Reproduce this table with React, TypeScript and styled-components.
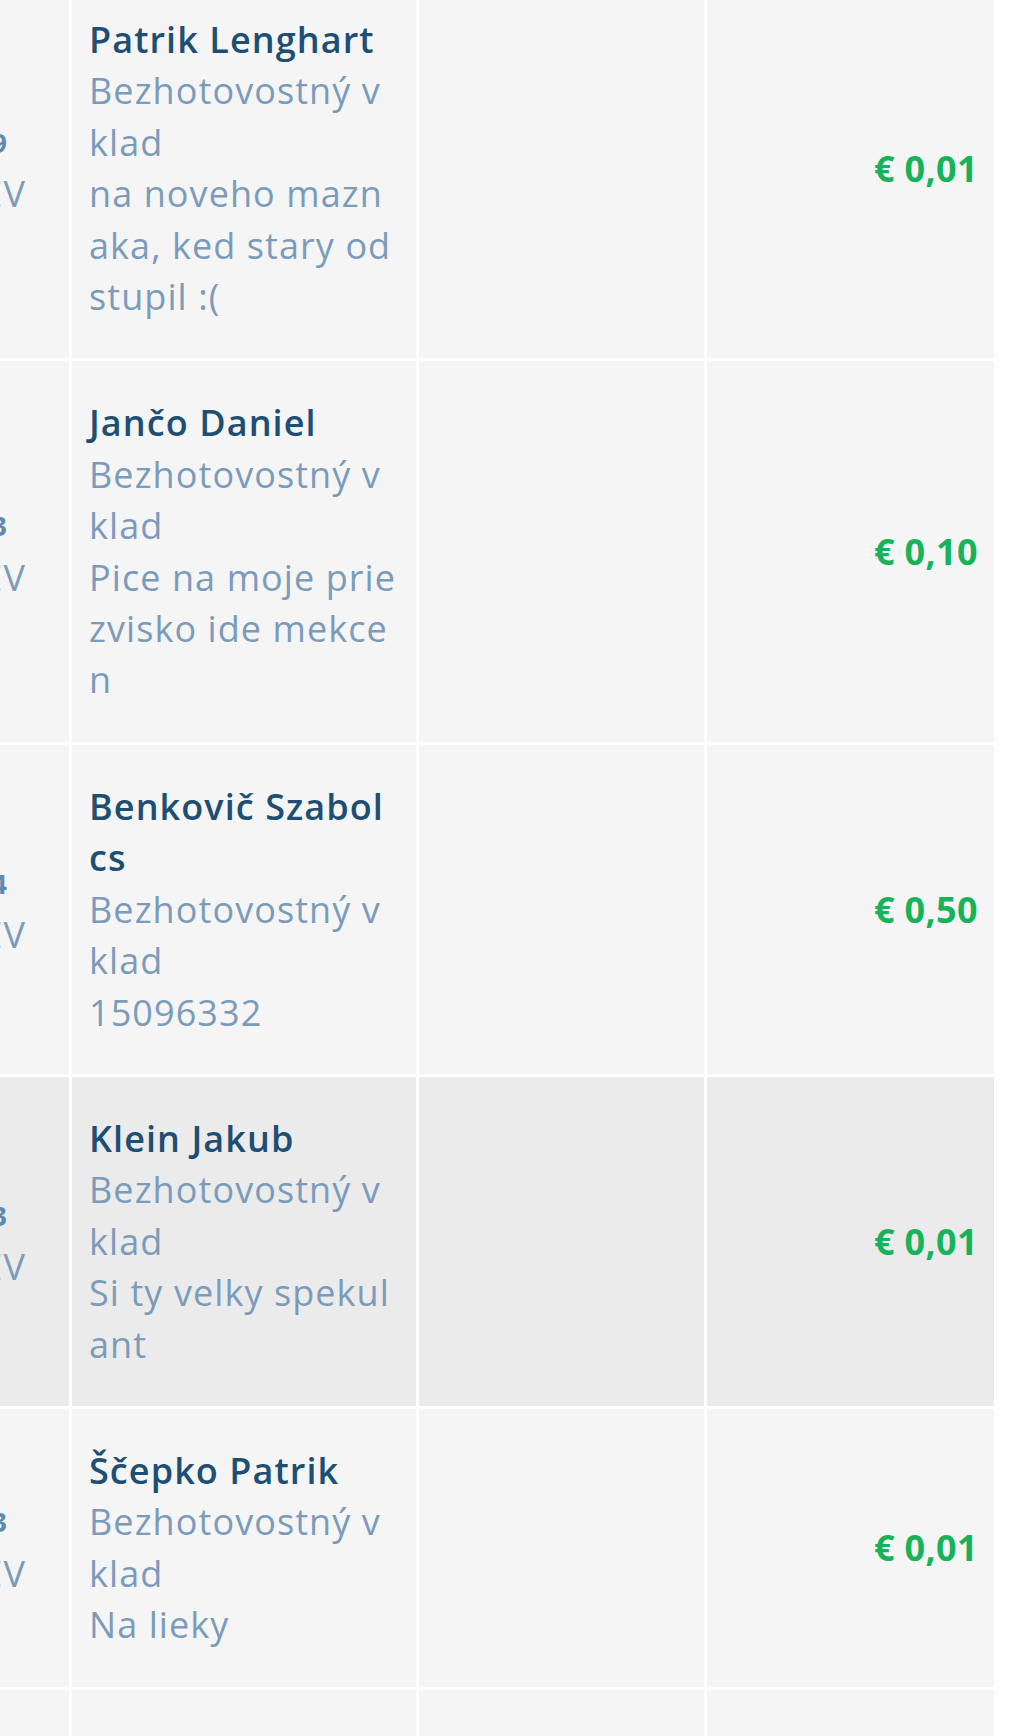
import styled, { createGlobalStyle } from "styled-components";

type Payment = {
  day: string;
  label: string;
  name: string;
  kind: string;
  note: string;
  amount: string;
  active?: boolean;
};

const payments: Payment[] = [
  {
    day: "29.09",
    label: "PREV",
    name: "Patrik Lenghart",
    kind: "Bezhotovostný vklad",
    note: "na noveho maznaka, ked stary odstupil :(",
    amount: "€ 0,01",
  },
  {
    day: "28.03",
    label: "PREV",
    name: "Jančo Daniel",
    kind: "Bezhotovostný vklad",
    note: "Pice na moje priezvisko ide mekcen",
    amount: "€ 0,10",
  },
  {
    day: "27.04",
    label: "PREV",
    name: "Benkovič Szabolcs",
    kind: "Bezhotovostný vklad",
    note: "15096332",
    amount: "€ 0,50",
  },
  {
    day: "27.03",
    label: "PREV",
    name: "Klein Jakub",
    kind: "Bezhotovostný vklad",
    note: "Si ty velky spekulant",
    amount: "€ 0,01",
    active: true,
  },
  {
    day: "26.03",
    label: "PREV",
    name: "Ščepko Patrik",
    kind: "Bezhotovostný vklad",
    note: "Na lieky",
    amount: "€ 0,01",
  },
  {
    day: "26.03",
    label: "PREV",
    name: "Horváth Martin",
    kind: "Bezhotovostný vklad",
    note: "Dik",
    amount: "€ 0,05",
  },
];

const App: React.FC = () => {
  return (
    <>
      <GlobalStyle />
      <ScrollArea>
        <PaymentsTable>
          <colgroup>
            <col style={{ width: 69 }} />
            <col style={{ width: 344 }} />
            <col style={{ width: 285 }} />
            <col style={{ width: 287 }} />
          </colgroup>
          <tbody>
            {payments.map((p, i) => (
              <Row key={i} $active={p.active}>
                <DateCell>
                  <DateClip>
                    <DateDay>{p.day}</DateDay>
                    <DateLabel>{p.label}</DateLabel>
                  </DateClip>
                </DateCell>
                <InfoCell>
                  <PayerName>{p.name}</PayerName>
                  <PayerText>{p.kind}</PayerText>
                  <PayerText>{p.note}</PayerText>
                </InfoCell>
                <SymbolCell />
                <AmountCell>{p.amount}</AmountCell>
              </Row>
            ))}
          </tbody>
        </PaymentsTable>
      </ScrollArea>
    </>
  );
};

export default App;

const GlobalStyle = createGlobalStyle`
  html, body {
    margin: 0;
    padding: 0;
    background: #fff;
  }
  body {
    font-family: "Open Sans", "Noto Sans", sans-serif;
    overflow: hidden;
  }
`;

const ScrollArea = styled.div`
  width: 1024px;
  overflow: hidden;
  margin-top: -25px;
`;

const PaymentsTable = styled.table`
  border-collapse: separate;
  border-spacing: 3px;
  table-layout: fixed;
  width: 1000px;
  margin-left: -3px;
  font-size: 36px;
  line-height: 51.4px;
  letter-spacing: 0.03em;
`;

const Row = styled.tr<{ $active?: boolean }>`
  td {
    background: ${(p) => (p.$active ? "#ebebeb" : "#f5f5f5")};
    vertical-align: middle;
  }
`;

const DateCell = styled.td`
  padding: 0;
`;

const DateClip = styled.div`
  display: flex;
  flex-direction: column;
  align-items: flex-end;
  overflow: hidden;
  white-space: nowrap;
`;

const DateDay = styled.span`
  font-size: 27px;
  font-weight: 700;
  color: #5f8ab3;
  margin-right: 61px;
`;

const DateLabel = styled.span`
  color: #7b9bbb;
  margin-right: 43px;
`;

const InfoCell = styled.td`
  padding: 36px 19px 36px 17px;
  word-break: break-all;
`;

const PayerName = styled.div`
  font-weight: 600;
  color: #1d4e74;
`;

const PayerText = styled.div`
  color: #7b9bbb;
`;

const SymbolCell = styled.td`
  padding: 36px 18px;
`;

const AmountCell = styled.td`
  padding: 36px 16px;
  text-align: right;
  font-weight: 700;
  letter-spacing: 0.01em;
  color: #17b35a;
  white-space: nowrap;
`;
